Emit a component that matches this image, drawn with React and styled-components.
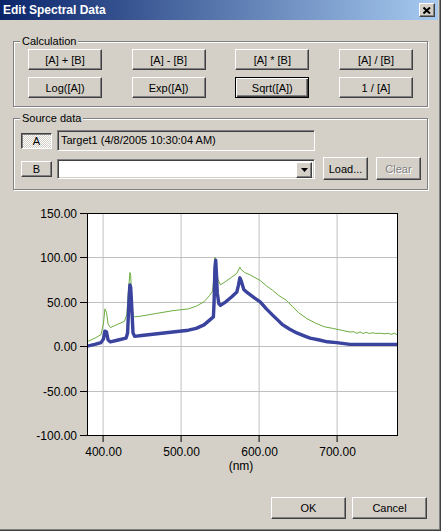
import React from 'react';
import styled, { createGlobalStyle, css } from 'styled-components';

const GlobalStyle = createGlobalStyle`
  html, body {
    margin: 0;
    padding: 0;
    background: #d4d0c8;
  }
  body {
    font-family: "Liberation Sans", Arial, sans-serif;
    font-size: 11px;
    color: #000;
  }
  * {
    box-sizing: border-box;
  }
`;

const raised = css`
  border: 1px solid;
  border-color: #fff #404040 #404040 #fff;
  box-shadow: inset -1px -1px #808080;
`;

const sunken = css`
  border: 1px solid;
  border-color: #808080 #fff #fff #808080;
  box-shadow: inset 1px 1px #404040, inset -1px -1px #d4d0c8;
`;

const Window = styled.div`
  width: 441px;
  height: 531px;
  background: #d4d0c8;
  border-right: 1px solid #404040;
  border-bottom: 1px solid #404040;
  box-shadow: inset -1px -1px #808080;
  display: flex;
  flex-direction: column;
`;

const TitleBar = styled.div`
  height: 20px;
  margin-right: 2px;
  padding: 0 3px 0 3px;
  display: flex;
  align-items: center;
  justify-content: space-between;
  background: linear-gradient(to right, #0a246a, #a6caf0);
  color: #fff;
  font-weight: bold;
  font-size: 12px;
`;

const CloseButton = styled.div`
  width: 16px;
  height: 14px;
  background: #d4d0c8;
  ${raised};
  display: flex;
  align-items: center;
  justify-content: center;
`;

const Body = styled.div`
  flex: 1;
  display: flex;
  flex-direction: column;
  padding: 0 12px 0 13px;
`;

const GroupBox = styled.div`
  position: relative;
  margin-top: ${({ $top }) => $top}px;
  border: 1px solid #808080;
  box-shadow: inset 1px 1px #fff, 1px 1px #fff;
`;

const Legend = styled.span`
  position: absolute;
  top: -7px;
  left: 6px;
  padding: 0 2px;
  line-height: 13px;
  background: #d4d0c8;
`;

const CalcGrid = styled.div`
  display: grid;
  grid-template-columns: repeat(4, 74px);
  grid-auto-rows: 21px;
  justify-content: space-between;
  row-gap: 7px;
  padding: 7px 14px 8px 14px;
`;

const Button = styled.button`
  font: inherit;
  color: #000;
  padding: 0;
  width: ${({ $w }) => ($w ? `${$w}px` : 'auto')};
  height: ${({ $h }) => ($h ? `${$h}px` : 'auto')};
  margin-left: ${({ $ml }) => ($ml ? `${$ml}px` : '0')};
  background: #d4d0c8;
  ${raised};
  ${({ $default }) =>
    $default &&
    css`
      border: 1px solid #000;
      box-shadow: inset 1px 1px #fff, inset -1px -1px #404040, inset -2px -2px #808080;
    `}
  ${({ $checked }) =>
    $checked &&
    css`
      border-color: #404040 #fff #fff #404040;
      box-shadow: inset 1px 1px #808080;
      background-color: #fff;
      background-image: repeating-conic-gradient(#d4d0c8 0 25%, #fff 0 50%);
      background-size: 2px 2px;
      padding-top: 1px;
    `}
  ${({ disabled }) =>
    disabled &&
    css`
      color: #808080;
      text-shadow: 1px 1px #fff;
    `}
`;

const SourceRows = styled.div`
  display: flex;
  flex-direction: column;
  gap: 6px;
  padding: 11px 6px 9px 7px;
`;

const SourceRow = styled.div`
  display: flex;
  align-items: center;
  height: ${({ $h }) => $h}px;
`;

const ReadOnlyField = styled.div`
  width: 258px;
  height: 21px;
  margin-left: 5px;
  padding: 2px 3px;
  line-height: 14px;
  background: #d4d0c8;
  ${sunken};
`;

const Combo = styled.div`
  width: 258px;
  height: 20px;
  margin-left: 5px;
  margin-right: 8px;
  padding: 2px;
  display: flex;
  justify-content: flex-end;
  background: #fff;
  ${sunken};
`;

const ComboArrow = styled.div`
  width: 16px;
  height: 16px;
  background: #d4d0c8;
  ${raised};
  display: flex;
  align-items: center;
  justify-content: center;
`;

const ChartWrap = styled.div`
  margin-top: 10px;
`;

const Footer = styled.div`
  display: flex;
  justify-content: flex-end;
  gap: 6px;
  margin-top: 20px;
  padding-right: 1px;
`;

/* plot geometry (svg coords) */
const PX0 = 74;
const PX1 = 384;
const PY0 = 13;
const PY1 = 235;
const xOf = (nm) => PX0 + (nm - 380) * 0.78;
const yOf = (v) => PY0 + (150 - v) * ((PY1 - PY0) / 250);

const blueData = [
  [380, 0], [390, 2], [398, 4], [401, 8], [403, 17], [405, 16], [407, 7], [410, 5],
  [420, 7], [430, 9], [432, 15], [434, 55], [435, 69], [436, 66], [437, 50], [439, 15],
  [441, 11], [450, 12], [470, 14], [490, 16], [510, 18], [520, 20], [530, 24], [538, 30],
  [542, 33], [543, 50], [544, 88], [545, 97], [546, 80], [547, 60], [549, 48], [551, 46],
  [558, 50], [566, 56], [572, 61], [574, 68], [576, 77], [578, 73], [581, 64], [586, 60],
  [595, 54], [602, 50], [610, 42], [618, 35], [625, 29], [631, 24], [640, 19], [649, 15],
  [660, 11], [666, 9], [678, 7], [688, 5], [700, 4], [717, 2], [740, 2], [760, 2], [778, 2],
];

const greenBase = [
  [380, 5], [390, 9], [398, 13], [401, 25], [403, 42], [405, 38], [407, 25], [410, 21],
  [420, 25], [428, 28], [431, 35], [433, 60], [435, 83], [436, 80], [437, 60], [439, 35],
  [441, 33], [450, 34], [470, 37], [490, 40], [510, 42], [520, 45], [530, 50], [537, 57],
  [541, 62], [543, 80], [544, 100], [545, 98], [546, 85], [548, 75], [551, 69], [558, 73],
  [566, 78], [572, 82], [576, 89], [578, 86], [582, 83], [590, 80], [602, 74], [610, 68],
  [618, 63], [626, 57], [635, 52], [643, 45], [651, 38], [662, 31], [673, 26], [684, 22],
  [695, 20], [706, 18], [717, 16],
];

// small detector noise on the tail of the green trace
const greenTail = [];
for (let nm = 722; nm <= 778; nm += 4) {
  const base = 15.5 - (nm - 720) * 0.03;
  const wiggle = Math.sin(nm * 2.3) * 0.9;
  greenTail.push([nm, base + wiggle]);
}
const greenData = [...greenBase, ...greenTail];

const toPath = (pts) =>
  pts.map(([nm, v], i) => `${i ? 'L' : 'M'}${xOf(nm).toFixed(1)},${yOf(v).toFixed(1)}`).join(' ');

const yTicks = [150, 100, 50, 0, -50, -100];
const xTicks = [400, 500, 600, 700];

const Chart = () => (
  <svg width="415" height="275" fontFamily="Liberation Sans, Arial, sans-serif" fontSize="12">
    <defs>
      <clipPath id="plot">
        <rect x={PX0} y={PY0} width={PX1 - PX0} height={PY1 - PY0} />
      </clipPath>
    </defs>
    <rect x={PX0} y={PY0} width={PX1 - PX0} height={PY1 - PY0} fill="#fff" />
    {xTicks.map((t) => (
      <line key={`gx${t}`} x1={xOf(t) + 0.5} x2={xOf(t) + 0.5} y1={PY0} y2={PY1} stroke="#c0c0c0" />
    ))}
    {yTicks.slice(1, -1).map((t) => (
      <line key={`gy${t}`} x1={PX0} x2={PX1} y1={Math.round(yOf(t)) + 0.5} y2={Math.round(yOf(t)) + 0.5} stroke="#c0c0c0" />
    ))}
    <g clipPath="url(#plot)" fill="none" strokeLinejoin="round">
      <path d={toPath(greenData)} stroke="#6cad3f" strokeWidth="1" />
      <path d={toPath(blueData)} stroke="#3a439e" strokeWidth="3.4" />
    </g>
    <rect x={PX0 + 0.5} y={PY0 + 0.5} width={PX1 - PX0} height={PY1 - PY0} fill="none" stroke="#000" />
    {yTicks.map((t) => (
      <g key={`ty${t}`}>
        <line x1={PX0 - 7} x2={PX0} y1={Math.round(yOf(t)) + 0.5} y2={Math.round(yOf(t)) + 0.5} stroke="#000" />
        <text x={PX0 - 10} y={Math.round(yOf(t)) + 4.5} textAnchor="end">
          {t.toFixed(2)}
        </text>
      </g>
    ))}
    {xTicks.map((t) => (
      <g key={`tx${t}`}>
        <line x1={xOf(t) + 0.5} x2={xOf(t) + 0.5} y1={PY1} y2={PY1 + 7} stroke="#000" />
        <text x={xOf(t) + 1} y={PY1 + 21} textAnchor="middle">
          {t.toFixed(2)}
        </text>
      </g>
    ))}
    <text x={228} y={PY1 + 35} textAnchor="middle">(nm)</text>
  </svg>
);

const calcOps = ['[A] + [B]', '[A] - [B]', '[A] * [B]', '[A] / [B]', 'Log([A])', 'Exp([A])', 'Sqrt([A])', '1 / [A]'];

const App = () => (
  <>
    <GlobalStyle />
    <Window>
      <TitleBar>
        <span>Edit Spectral Data</span>
        <CloseButton>
          <svg width="8" height="7" viewBox="0 0 8 7">
            <path d="M0.5 0.5 L7 6.5 M7 0.5 L0.5 6.5" stroke="#000" strokeWidth="2" />
          </svg>
        </CloseButton>
      </TitleBar>
      <Body>
        <GroupBox $top={21}>
          <Legend>Calculation</Legend>
          <CalcGrid>
            {calcOps.map((op) => (
              <Button key={op} $default={op === 'Sqrt([A])'}>
                {op}
              </Button>
            ))}
          </CalcGrid>
        </GroupBox>

        <GroupBox $top={11}>
          <Legend>Source data</Legend>
          <SourceRows>
            <SourceRow $h={21}>
              <Button $w={31} $h={16} $checked>A</Button>
              <ReadOnlyField>Target1 (4/8/2005 10:30:04 AM)</ReadOnlyField>
            </SourceRow>
            <SourceRow $h={23}>
              <Button $w={31} $h={16}>B</Button>
              <Combo>
                <ComboArrow>
                  <svg width="7" height="4" viewBox="0 0 7 4">
                    <path d="M0 0 H7 L3.5 4 Z" fill="#000" />
                  </svg>
                </ComboArrow>
              </Combo>
              <Button $w={45} $h={23}>Load...</Button>
              <Button $w={45} $h={23} $ml={8} disabled>Clear</Button>
            </SourceRow>
          </SourceRows>
        </GroupBox>

        <ChartWrap>
          <Chart />
        </ChartWrap>

        <Footer>
          <Button $w={75} $h={22}>OK</Button>
          <Button $w={75} $h={22}>Cancel</Button>
        </Footer>
      </Body>
    </Window>
  </>
);

export default App;
